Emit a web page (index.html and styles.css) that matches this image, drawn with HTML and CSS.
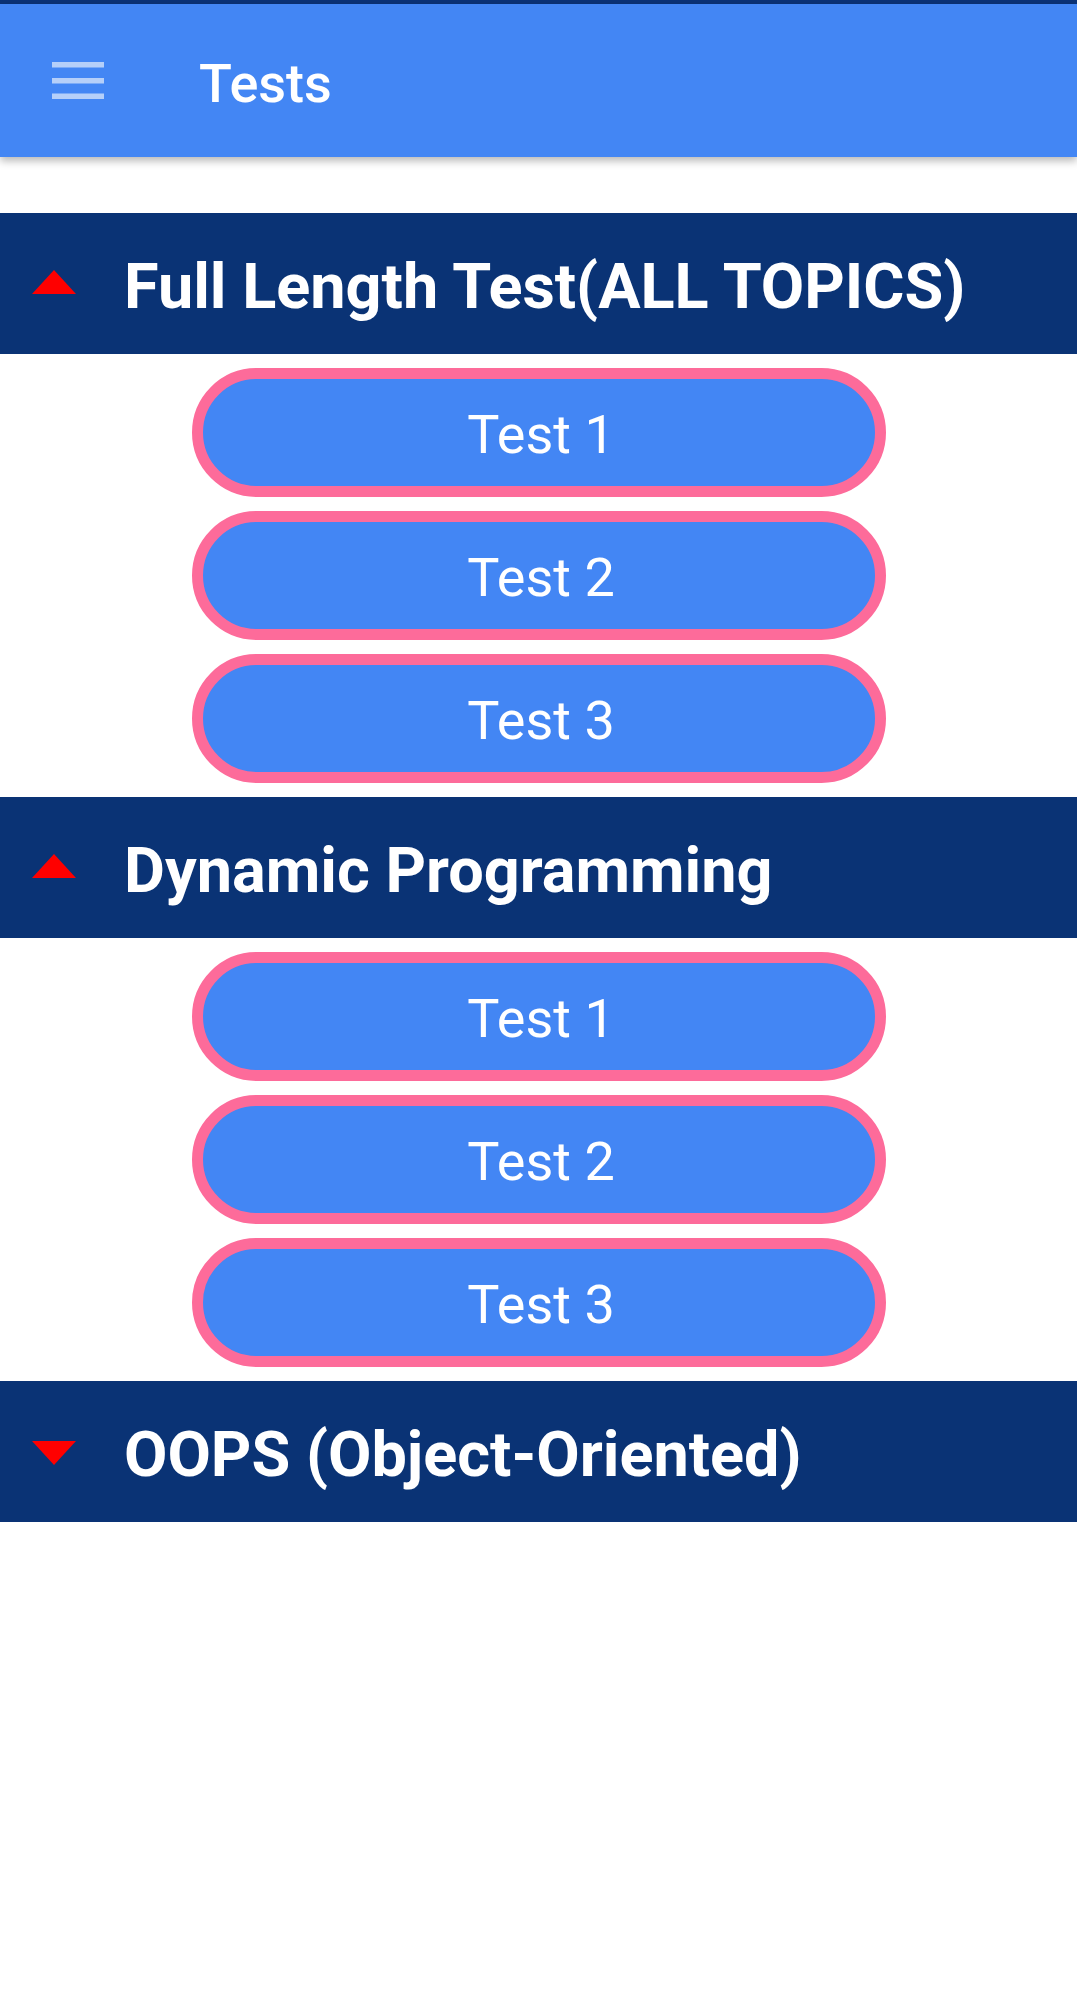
FILE: index.html
```html
<!DOCTYPE html>
<html>
<head>
<meta charset="utf-8">
<link rel="stylesheet" href="styles.css">
</head>
<body>
<div class="status"></div>
<header class="appbar">
  <svg class="menu" width="52" height="38" viewBox="0 0 52 38"><rect x="0" y="0" width="52" height="5.5"/><rect x="0" y="16" width="52" height="5.5"/><rect x="0" y="31.5" width="52" height="5.5"/></svg>
  <span class="title">Tests</span>
</header>
<main class="content">
  <section class="group">
    <div class="group-head">
      <svg class="caret" width="44" height="24" viewBox="0 0 44 24"><polygon points="22,0 44,24 0,24"/></svg>
      <span class="group-title">Full Length Test(ALL TOPICS)</span>
    </div>
    <div class="group-list">
      <button class="test-btn">Test 1</button>
      <button class="test-btn">Test 2</button>
      <button class="test-btn">Test 3</button>
    </div>
  </section>
  <section class="group">
    <div class="group-head">
      <svg class="caret" width="44" height="24" viewBox="0 0 44 24"><polygon points="22,0 44,24 0,24"/></svg>
      <span class="group-title">Dynamic Programming</span>
    </div>
    <div class="group-list">
      <button class="test-btn">Test 1</button>
      <button class="test-btn">Test 2</button>
      <button class="test-btn">Test 3</button>
    </div>
  </section>
  <section class="group">
    <div class="group-head">
      <svg class="caret down" width="44" height="24" viewBox="0 0 44 24"><polygon points="0,0 44,0 22,24"/></svg>
      <span class="group-title">OOPS (Object-Oriented)</span>
    </div>
  </section>
</main>
</body>
</html>
```
FILE: styles.css
```css
* { box-sizing: border-box; }
html, body { margin: 0; padding: 0; background: #ffffff; }
body { font-family: Roboto, "Noto Sans", sans-serif; width: 1077px; }

.status { height: 4px; background: #0b3276; }

.appbar {
  height: 153px;
  background: #4386f4;
  display: flex;
  align-items: center;
  box-shadow: 0 4px 8px rgba(0,0,0,0.28);
  position: relative;
  z-index: 1;
}
.menu { margin-left: 52px; fill: #b5cff9; }
.title {
  margin-left: 95px;
  color: #ffffff;
  font-size: 54px;
  font-weight: 500;
  line-height: 1;
  margin-top: 6px;
}

.content { padding-top: 56px; }

.group-head {
  height: 141px;
  background: #0a3375;
  display: flex;
  align-items: center;
}
.caret { margin-left: 32px; fill: #ff0000; margin-top: -4px; }
.caret.down { margin-top: 2px; }
.group-title {
  margin-left: 48px;
  color: #ffffff;
  font-size: 63px;
  font-weight: 700;
  line-height: 1;
  margin-top: 5px;
}

.group-list {
  display: flex;
  flex-direction: column;
  align-items: center;
  gap: 14px;
  padding: 14px 0;
}
.test-btn {
  width: 694px;
  height: 129px;
  border: 11px solid #fd6b9a;
  border-radius: 65px;
  background: #4386f4;
  color: #ffffff;
  font-family: Roboto, "Noto Sans", sans-serif;
  font-size: 54px;
  font-weight: 400;
  padding: 4px 0 0 5px;
  margin: 0;
  line-height: 1;
}
```
